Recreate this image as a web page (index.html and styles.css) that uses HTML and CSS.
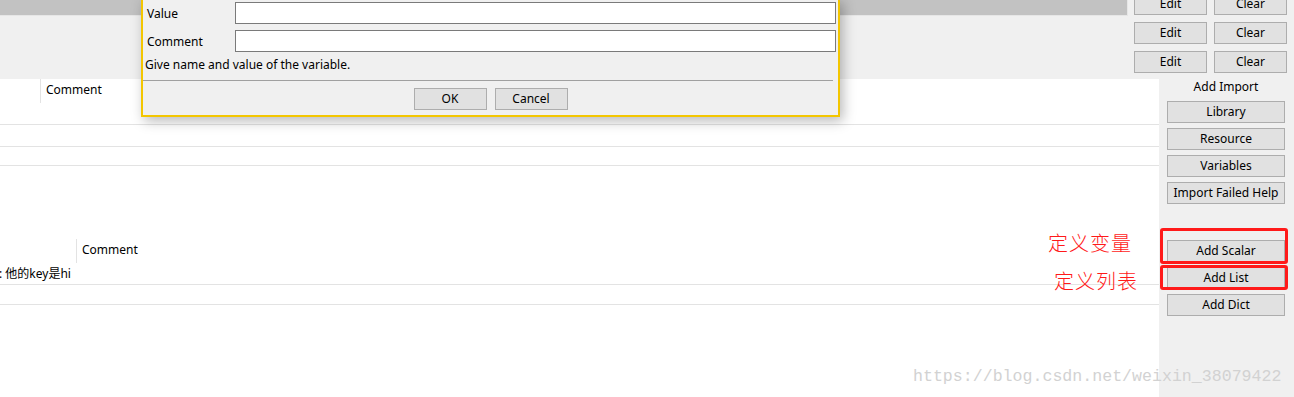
FILE: index.html
```html
<!DOCTYPE html>
<html lang="en">
<head>
    <meta charset="UTF-8">
    <title>Variable Table</title>
    <link rel="stylesheet" href="styles.css">
</head>
<body>
    <div class="app">
        <!-- Settings pane -->
        <div class="top-pane">
            <div class="path-bar"></div>
            <div class="setting-buttons">
                <div class="btn-row"><button class="btn">Edit</button><button class="btn">Clear</button></div>
                <div class="btn-row"><button class="btn">Edit</button><button class="btn">Clear</button></div>
                <div class="btn-row"><button class="btn">Edit</button><button class="btn">Clear</button></div>
            </div>
        </div>

        <div class="main">
            <div class="tables">
                <!-- Import table -->
                <div class="table table-imports">
                    <div class="table-head">
                        <div class="col col-first"></div>
                        <div class="col col-comment">Comment</div>
                    </div>
                    <div class="table-row row-tall"></div>
                    <div class="table-row row-tall"></div>
                    <div class="table-row row-short"></div>
                </div>

                <!-- Variable table -->
                <div class="table table-vars">
                    <div class="table-head">
                        <div class="col col-first"></div>
                        <div class="col col-comment">Comment</div>
                    </div>
                    <div class="table-row row-tall"><span class="cell-text">: 他的key是hi</span></div>
                    <div class="table-row row-short"></div>
                </div>
            </div>

            <div class="sidebar">
                <div class="side-label">Add Import</div>
                <button class="btn side-btn">Library</button>
                <button class="btn side-btn">Resource</button>
                <button class="btn side-btn">Variables</button>
                <button class="btn side-btn">Import Failed Help</button>
                <button class="btn side-btn side-gap">Add Scalar</button>
                <button class="btn side-btn">Add List</button>
                <button class="btn side-btn">Add Dict</button>
            </div>
        </div>

        <!-- Scalar dialog -->
        <div class="dialog">
            <div class="field"><label>Value</label><input class="field-input" type="text"></div>
            <div class="field"><label>Comment</label><input class="field-input" type="text"></div>
            <div class="hint">Give name and value of the variable.</div>
            <div class="separator"></div>
            <div class="dialog-buttons">
                <button class="btn">OK</button>
                <button class="btn">Cancel</button>
            </div>
        </div>

        <!-- Annotations -->
        <div class="mark mark-scalar"></div>
        <div class="mark mark-list"></div>
        <div class="note note-scalar">定义变量</div>
        <div class="note note-list">定义列表</div>

        <div class="watermark">https://blog.csdn.net/weixin_38079422</div>
    </div>
</body>
</html>
```

FILE: styles.css
```css
:root {
    --panel-bg: #f0f0f0;
    --btn-bg: #e1e1e1;
    --btn-border: #adadad;
    --grid-line: #e3e3e3;
    --accent-yellow: #f3c600;
    --mark-red: #ff1a1a;
}

body {
    margin: 0;
    font-family: "Noto Sans", "Noto Sans CJK SC", sans-serif;
    font-size: 12px;
    color: #000;
    background: #fff;
    overflow: hidden;
}

.app {
    position: relative;
    width: 1294px;
    height: 397px;
    overflow: hidden;
}

/* Buttons */
.btn {
    box-sizing: border-box;
    height: 22px;
    padding: 0;
    margin: 0;
    background: var(--btn-bg);
    border: 1px solid var(--btn-border);
    font-family: inherit;
    font-size: 12px;
    color: #000;
    line-height: 18px;
}

/* Top pane */
.top-pane {
    display: flex;
    height: 79px;
    background: var(--panel-bg);
}

.path-bar {
    box-sizing: border-box;
    width: 1128px;
    height: 16px;
    background: #c2c2c2;
    border-right: 1px solid #e6e6e6;
    border-bottom: 1px solid #e6e6e6;
}

.setting-buttons {
    display: flex;
    flex-direction: column;
    gap: 7px;
    margin-top: -7px;
    margin-left: 6px;
}

.btn-row {
    display: flex;
    gap: 7px;
}

.btn-row .btn {
    width: 73px;
}

/* Main area */
.main {
    display: flex;
    height: 318px;
}

.tables {
    flex: 0 0 1159px;
    background: #fff;
}

.table-head {
    display: flex;
    height: 24px;
}

.col-first {
    border-right: 1px solid var(--grid-line);
}

.table-imports .col-first {
    width: 40px;
}

.table-vars .col-first {
    width: 76px;
}

.col-comment {
    padding-left: 5px;
    line-height: 22px;
}

.table-row {
    box-sizing: border-box;
    border-bottom: 1px solid var(--grid-line);
}

.row-tall {
    height: 22px;
}

.row-short {
    height: 19px;
}

.table-vars {
    margin-top: 73px;
}

.table-vars .row-short {
    height: 20px;
}

.cell-text {
    display: block;
    margin-left: -1px;
    line-height: 21px;
}

/* Right sidebar */
.sidebar {
    flex: 1;
    display: flex;
    flex-direction: column;
    gap: 5px;
    padding: 0 9px 0 8px;
    background: var(--panel-bg);
}

.side-label {
    height: 17px;
    line-height: 16px;
    text-align: center;
}

.side-btn {
    width: 118px;
}

.side-gap {
    margin-top: 31px;
}

/* Dialog */
.dialog {
    position: absolute;
    top: -2px;
    left: 141px;
    width: 693px;
    padding: 2px 2px 5px 0;
    background: var(--panel-bg);
    border: 2px solid var(--accent-yellow);
    box-shadow: 3px 4px 12px rgba(0, 0, 0, 0.28);
}

.field {
    display: flex;
    align-items: center;
    height: 22px;
    margin-bottom: 6px;
}

.field label {
    width: 92px;
    padding-left: 4px;
    box-sizing: border-box;
}

.field-input {
    flex: 1;
    box-sizing: border-box;
    height: 22px;
    margin: 0;
    border: 1px solid #7a7a7a;
    background: #fff;
}

.hint {
    margin: -1px 0 0 2px;
    line-height: 16px;
}

.separator {
    height: 1px;
    margin: 7px 3px 0 0;
    background: #a0a0a0;
}

.dialog-buttons {
    display: flex;
    justify-content: center;
    gap: 8px;
    margin-top: 7px;
    padding-left: 2px;
}

.dialog-buttons .btn {
    width: 73px;
}

/* Red annotations */
.mark {
    position: absolute;
    left: 1160px;
    width: 128px;
    border: 3px solid var(--mark-red);
    border-radius: 3px;
    box-sizing: border-box;
}

.mark-scalar {
    top: 228px;
    height: 36px;
}

.mark-list {
    top: 265px;
    height: 25px;
}

.note {
    position: absolute;
    color: var(--mark-red);
    font-family: "Noto Sans CJK SC", sans-serif;
    font-weight: 300;
    font-size: 20px;
    line-height: 22px;
    letter-spacing: 1px;
}

.note-scalar {
    top: 232px;
    left: 1048px;
}

.note-list {
    top: 270px;
    left: 1054px;
}

.watermark {
    position: absolute;
    top: 366px;
    left: 913px;
    font-family: "Liberation Mono", monospace;
    font-size: 16.6px;
    color: #d2d2d2;
    line-height: 22px;
}
```
